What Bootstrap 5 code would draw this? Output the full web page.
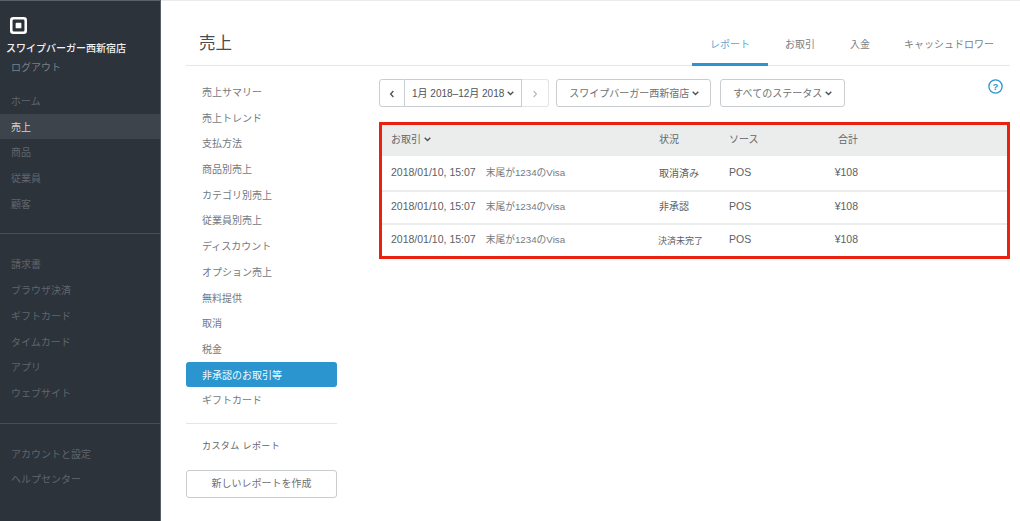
<!DOCTYPE html>
<html lang="ja">
<head>
<meta charset="utf-8">
<title>売上</title>
<link href="https://cdn.jsdelivr.net/npm/bootstrap@5.3.0/dist/css/bootstrap.min.css" rel="stylesheet">
<style>
html,body{height:521px;overflow:hidden;background:#fff}
body{font-family:"Liberation Sans","Noto Sans CJK JP",sans-serif;font-size:10px;color:#6c7176}
.shell{height:521px}
.side{width:161px;flex:none;background:#2c333b;border-right:1px solid #59606a;border-top:1px solid #59606a;color:#5f666e}
.brand{padding:16px 0 0 10px}
.brand svg{display:block}
.brand-name{color:#f2f3f4;font-size:10px;font-weight:500;margin:7px 0 0 -4px;line-height:16px;white-space:nowrap}
.logout{color:#7b8188;line-height:20px;padding:1px 0 0 1px}
.side-link{display:block;height:25.7px;line-height:25.7px;padding:1px 0 0 11px;color:#5f666e;text-decoration:none}
.side-link.on{background:#3d444c;color:#d5d7d9}
.side-rule{border-top:1px solid #474e56;margin:17px 0}
.side-first{margin-top:10px}
.main{padding:0 10px 0 25px;min-width:0;border-top:1px solid #e9ebec}
.head{height:65px;border-bottom:1px solid #e4e6e7;padding-left:13px}
.head h1{font-size:16.5px;font-weight:400;color:#474c52;margin:0;line-height:20px;padding-top:32px}
.tab-link{display:block;height:65px;padding:36px 0 0;margin-bottom:-1px;line-height:16px;color:#7a7f84;text-decoration:none;white-space:nowrap}
.tab-link.on{color:#5ba9d6;border-bottom:3px solid #2a95cf;padding-left:18px;padding-right:18px;margin-right:-18px}
.tab-row{gap:35px;padding-right:16px}
.tab-row .tab-link:last-child{margin-left:-1px}
.sub{width:151px;flex:none;padding-top:13px}
.sub-link{display:block;height:25.7px;line-height:25.7px;padding:1px 0 0 16px;color:#74797e;text-decoration:none;border-radius:3px}
.sub-link.on{background:#2a95cf;color:#f4fafd}
.sub-rule{border-top:1px solid #e4e6e7;margin:10px 0 0}
.custom{font-size:9px;letter-spacing:.4px;color:#5f6469;padding:14px 0 0 16px;line-height:16px}
.new-btn{height:28px;margin-top:16px;font-size:10px;color:#6c7176;border:1px solid #c9cdd0;border-radius:3px;padding:0;background:#fff}
.content{padding:13px 0 0 42px;min-width:0}
.bar{height:28px;gap:8px;position:relative}
.date-group{margin-right:-1px}
.tool{height:28px;border:1px solid #c9cdd0;border-radius:3px;background:#fff;color:#6c7176;font-size:10px;padding:0 12px;white-space:nowrap}
.tool-store{padding-right:11px}
.tool-status{margin-left:1px}
.tool-dark{color:#4d5257;border-radius:0;border-left:0;padding:0 7px}
.arrow{width:26px;padding:0;border-radius:3px 0 0 3px}
.arrow-next{width:27px;padding:0;border-left:0;border-radius:0 3px 3px 0;border-color:#e2e4e6}
.chev{display:inline-block;vertical-align:1px;margin-left:3px}
.help{position:absolute;right:7px;top:0}
.frame{border:3px solid #e8220f;margin-top:15px;height:137px}
.frame table{width:100%;table-layout:fixed;margin:0;font-size:10px;color:#5b6066}
.frame th,.frame td{padding:0;border-bottom:2px solid #eceeee;vertical-align:middle;white-space:nowrap}
.frame thead th{height:31px;padding-bottom:2px;background:#ebeded;font-weight:400;color:#62676c;border-bottom:0}
.frame tbody tr:nth-child(1) td{height:35px}
.frame tbody tr:nth-child(2) td{height:33px;padding-bottom:2px}
.frame tbody tr:nth-child(3) td{height:33px;border-bottom:0;padding-bottom:2px}
.frame tbody tr:nth-child(3) td.small-st{padding:1px 0 0}
.c-a{padding-left:9px!important;width:277px}.c-b{width:70px}.c-c{width:80px}.c-d{width:49px;text-align:right}
.num{font-size:10.5px}
.card-note{margin-left:10px;font-size:9.75px;color:#75797e}
.small-st{font-size:9px}
.small-st span{margin-left:-1px}
</style>
</head>
<body>
<div class="shell d-flex">
  <aside class="side">
    <div class="brand">
      <svg width="17" height="17" viewBox="0 0 16 16" aria-hidden="true"><path fill="#fff" fill-rule="evenodd" d="M3 0h10a3 3 0 0 1 3 3v10a3 3 0 0 1-3 3H3a3 3 0 0 1-3-3V3a3 3 0 0 1 3-3zm.6 2.4A1.2 1.2 0 0 0 2.4 3.6v8.8a1.2 1.2 0 0 0 1.2 1.2h8.8a1.2 1.2 0 0 0 1.2-1.2V3.6a1.2 1.2 0 0 0-1.2-1.2zM6 5.3h4c.4 0 .7.3.7.7v4c0 .4-.3.7-.7.7H6a.7.7 0 0 1-.7-.7V6c0-.4.3-.7.7-.7z"/></svg>
      <div class="brand-name">スワイプバーガー西新宿店</div>
      <div class="logout">ログアウト</div>
    </div>
    <nav class="side-first">
      <a class="side-link" href="#">ホーム</a>
      <a class="side-link on" href="#">売上</a>
      <a class="side-link" href="#">商品</a>
      <a class="side-link" href="#">従業員</a>
      <a class="side-link" href="#">顧客</a>
      <div class="side-rule"></div>
      <a class="side-link" href="#">請求書</a>
      <a class="side-link" href="#">ブラウザ決済</a>
      <a class="side-link" href="#">ギフトカード</a>
      <a class="side-link" href="#">タイムカード</a>
      <a class="side-link" href="#">アプリ</a>
      <a class="side-link" href="#">ウェブサイト</a>
      <div class="side-rule"></div>
      <a class="side-link" href="#">アカウントと設定</a>
      <a class="side-link" href="#">ヘルプセンター</a>
    </nav>
  </aside>
  <div class="main flex-grow-1">
    <header class="head d-flex justify-content-between">
      <h1>売上</h1>
      <nav class="d-flex tab-row">
        <a class="tab-link on" href="#">レポート</a>
        <a class="tab-link" href="#">お取引</a>
        <a class="tab-link" href="#">入金</a>
        <a class="tab-link" href="#">キャッシュドロワー</a>
      </nav>
    </header>
    <div class="d-flex">
      <div class="sub">
        <a class="sub-link" href="#">売上サマリー</a>
        <a class="sub-link" href="#">売上トレンド</a>
        <a class="sub-link" href="#">支払方法</a>
        <a class="sub-link" href="#">商品別売上</a>
        <a class="sub-link" href="#">カテゴリ別売上</a>
        <a class="sub-link" href="#">従業員別売上</a>
        <a class="sub-link" href="#">ディスカウント</a>
        <a class="sub-link" href="#">オプション売上</a>
        <a class="sub-link" href="#">無料提供</a>
        <a class="sub-link" href="#">取消</a>
        <a class="sub-link" href="#">税金</a>
        <a class="sub-link on" href="#">非承認のお取引等</a>
        <a class="sub-link" href="#">ギフトカード</a>
        <div class="sub-rule"></div>
        <div class="custom">カスタム レポート</div>
        <button class="new-btn w-100" type="button">新しいレポートを作成</button>
      </div>
      <div class="content flex-grow-1">
        <div class="bar d-flex">
          <div class="d-flex date-group">
            <button class="tool arrow" type="button" aria-label="前へ"><svg width="6" height="8" viewBox="0 0 6 8"><path d="M4.4 1 1.6 4l2.8 3" fill="none" stroke="#4d5257" stroke-width="1.3"/></svg></button>
            <button class="tool tool-dark" type="button">1月 2018–12月 2018<svg class="chev" width="7" height="5" viewBox="0 0 7 5"><path d="M.7.8 3.5 3.6 6.3.8" fill="none" stroke="#4d5257" stroke-width="1.4"/></svg></button>
            <button class="tool arrow-next" type="button" aria-label="次へ"><svg width="6" height="8" viewBox="0 0 6 8"><path d="M1.6 1 4.4 4 1.6 7" fill="none" stroke="#b6babd" stroke-width="1.2"/></svg></button>
          </div>
          <button class="tool tool-store" type="button">スワイプバーガー西新宿店<svg class="chev" width="7" height="5" viewBox="0 0 7 5"><path d="M.7.8 3.5 3.6 6.3.8" fill="none" stroke="#4d5257" stroke-width="1.4"/></svg></button>
          <button class="tool tool-status" type="button">すべてのステータス<svg class="chev" width="7" height="5" viewBox="0 0 7 5"><path d="M.7.8 3.5 3.6 6.3.8" fill="none" stroke="#4d5257" stroke-width="1.4"/></svg></button>
          <svg class="help" width="15" height="15" viewBox="0 0 15 15" aria-label="ヘルプ"><circle cx="7.5" cy="7.5" r="6.6" fill="none" stroke="#2a95cf" stroke-width="1.3"/><text x="7.5" y="10.8" text-anchor="middle" font-size="9.5" font-weight="700" fill="#2a95cf" font-family="Liberation Sans">?</text></svg>
        </div>
        <div class="frame">
          <table>
            <thead><tr>
              <th class="c-a">お取引<svg class="chev" width="7" height="5" viewBox="0 0 7 5"><path d="M.7.8 3.5 3.6 6.3.8" fill="none" stroke="#4d5257" stroke-width="1.4"/></svg></th>
              <th class="c-b">状況</th><th class="c-c">ソース</th><th class="c-d">合計</th><th></th>
            </tr></thead>
            <tbody>
              <tr><td class="c-a"><span class="num">2018/01/10, 15:07</span><span class="card-note">末尾が1234のVisa</span></td><td>取消済み</td><td class="num">POS</td><td class="c-d num">¥108</td><td></td></tr>
              <tr><td class="c-a"><span class="num">2018/01/10, 15:07</span><span class="card-note">末尾が1234のVisa</span></td><td>非承認</td><td class="num">POS</td><td class="c-d num">¥108</td><td></td></tr>
              <tr><td class="c-a"><span class="num">2018/01/10, 15:07</span><span class="card-note">末尾が1234のVisa</span></td><td class="small-st"><span>決済未完了</span></td><td class="num">POS</td><td class="c-d num">¥108</td><td></td></tr>
            </tbody>
          </table>
        </div>
      </div>
    </div>
  </div>
</div>
<script src="https://cdn.jsdelivr.net/npm/bootstrap@5.3.0/dist/js/bootstrap.bundle.min.js"></script>
</body>
</html>
